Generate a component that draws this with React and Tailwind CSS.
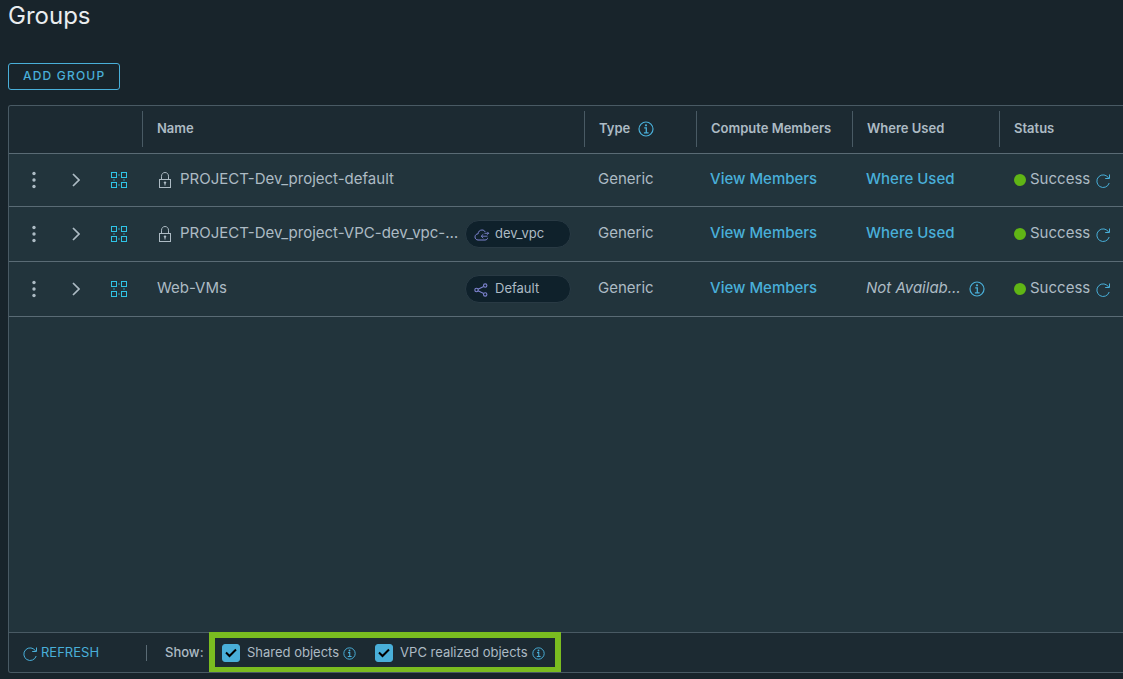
import { useState } from 'react';
import clsx from 'clsx';

const COLUMNS = [
  { label: 'Name' },
  { label: 'Type', info: true },
  { label: 'Compute Members' },
  { label: 'Where Used' },
  { label: 'Status' },
];

const GROUPS = [
  { name: 'PROJECT-Dev_project-default', locked: true, used: true, height: 'h-[53px]' },
  { name: 'PROJECT-Dev_project-VPC-dev_vpc-…', locked: true, used: true, tag: 'dev_vpc', TagIcon: CloudIcon, height: 'h-[55px]' },
  { name: 'Web-VMs', tag: 'Default', TagIcon: ShareIcon, height: 'h-[55px]' },
];

function InfoIcon({ className }) {
  return (
    <svg viewBox="0 0 16 16" fill="none" stroke="currentColor" className={clsx('shrink-0 text-[#49afd9]', className)} aria-hidden="true">
      <circle cx="8" cy="8" r="7" strokeWidth="1.2" />
      <path d="M6.2 6.9H8.3V11.6M5.9 11.8H10.6" strokeWidth="1.3" />
      <circle cx="8" cy="4.3" r="1.1" fill="currentColor" stroke="none" />
    </svg>
  );
}

function RefreshIcon({ className }) {
  return (
    <svg viewBox="0 0 14 14" fill="none" stroke="currentColor" className={clsx('shrink-0 text-[#49afd9]', className)} aria-hidden="true">
      <path d="M13.200 9A6.300 6.300 0 1 1 12.600 4" />
      <path d="M13.500 0.500V4.500H9.200" />
    </svg>
  );
}

function LockIcon() {
  return (
    <svg viewBox="0 0 14 18" width="14" height="18" fill="none" stroke="#adbbc4" className="shrink-0" aria-hidden="true">
      <path d="M3.5 8V5.2C3.5 3 5 1.5 7 1.5S10.5 3 10.5 5.2V8" />
      <rect x="1.5" y="8.5" width="11" height="8" />
      <circle cx="7" cy="11.6" r="1.2" fill="#adbbc4" stroke="none" />
      <path d="M7 12V14.5" />
    </svg>
  );
}

function GroupIcon() {
  return (
    <svg viewBox="0 0 18 18" width="18" height="18" fill="none" stroke="#2fc4e6" className="shrink-0" aria-hidden="true">
      <rect x="1.5" y="1.5" width="5" height="5" />
      <rect x="11.5" y="1.5" width="5" height="5" />
      <rect x="1.5" y="11.5" width="5" height="5" />
      <rect x="11.5" y="11.5" width="5" height="5" />
      <path d="M8 4H10M8 14H10M4 8V10M14 8V10" strokeOpacity="0.7" />
    </svg>
  );
}

function CloudIcon() {
  return (
    <svg viewBox="0 0 16 12" width="16" height="12" fill="none" stroke="#7d83cf" className="shrink-0" aria-hidden="true">
      <path d="M11.2 3C10.6 1.6 9.4 1 8 1C5.8 1 4.2 2.6 4.1 4.8C2.300 4.900 1 6.100 1 7.900C1 9.700 2.300 11 4 11H11C12.700 11 13.600 10 13.600 8.800" />
      <path d="M7.200 7.200H13.500M9.300 5.200L7.200 7.200L9.300 9.200M10.500 4.300H14.700M13.300 2.900L14.700 4.300L13.300 5.700" strokeWidth="0.9" />
    </svg>
  );
}

function ShareIcon() {
  return (
    <svg viewBox="0 0 14 14" width="14" height="14" fill="none" stroke="#7d83cf" strokeWidth="1.1" className="shrink-0" aria-hidden="true">
      <circle cx="2.5" cy="7" r="1.7" />
      <circle cx="11.2" cy="2.6" r="1.7" />
      <circle cx="11.2" cy="11.4" r="1.7" />
      <path d="M4 6.2L9.7 3.4M4 7.8L9.7 10.6" />
    </svg>
  );
}

function RowActions() {
  return (
    <div className="flex items-center pl-[19px]">
      <button type="button" aria-label="Row actions" className="flex w-3 justify-center text-[#adbbc4]">
        <svg viewBox="0 0 4 18" width="4" height="18" fill="currentColor">
          <circle cx="2" cy="2.5" r="1.7" />
          <circle cx="2" cy="9" r="1.7" />
          <circle cx="2" cy="15.5" r="1.7" />
        </svg>
      </button>
      <button type="button" aria-label="Expand row" className="ml-8 pt-px text-[#adbbc4]">
        <svg viewBox="0 0 8 14" width="8" height="14" fill="none" stroke="currentColor" strokeWidth="1.7">
          <path d="M1 1L7 7L1 13" />
        </svg>
      </button>
      <span className="ml-[30px]">
        <GroupIcon />
      </span>
    </div>
  );
}

function ShowOption({ id, label }) {
  const [checked, setChecked] = useState(true);

  return (
    <div className="flex items-center">
      <span className="relative flex size-[18px]">
        <input
          id={id}
          type="checkbox"
          checked={checked}
          onChange={(e) => setChecked(e.target.checked)}
          className="size-[18px] appearance-none rounded-[3px] border border-[#49afd9] checked:bg-[#49afd9]"
        />
        {checked && (
          <svg viewBox="0 0 18 18" fill="none" stroke="#000" strokeWidth="2" className="pointer-events-none absolute inset-0">
            <path d="M4 8.5L7.5 12L14 5.5" />
          </svg>
        )}
      </span>
      <label htmlFor={id} className="ml-[7px]">
        {label}
      </label>
      <InfoIcon className="mt-0.5 ml-1 size-[13px]" />
    </div>
  );
}

export default function App() {
  return (
    <div className="flex min-h-screen flex-col bg-[#18242b] pb-1.5 pl-2 font-['Inter',sans-serif] text-[#adbbc4]">
      <h1 className="text-2xl text-[#e9ecef]">Groups</h1>
      <button
        type="button"
        className="mt-[31px] mb-[15px] h-[27px] self-start rounded-[3px] border border-[#49afd9] px-3.5 pb-0.5 text-xs font-medium tracking-widest text-[#49afd9]"
      >
        ADD GROUP
      </button>

      <div className="flex flex-1 flex-col overflow-hidden rounded-l-[3px] border border-r-0 border-[#495a64] bg-[#22343c]">
        <table className="w-full table-fixed border-collapse text-left">
          <colgroup>
            <col className="w-[133px]" />
            <col />
            <col className="w-28" />
            <col className="w-[156px]" />
            <col className="w-[147px]" />
            <col className="w-[124px]" />
          </colgroup>
          <thead>
            <tr className="h-[47px] border-b border-[#5a6b75] bg-[#1c2a32]">
              <th aria-label="Actions" />
              {COLUMNS.map(({ label, info }) => (
                <th key={label} className="p-0 text-[13px] font-semibold">
                  <div className="flex h-9 items-center gap-2 border-l border-[#495a64] pb-0.5 pl-3.5">
                    {label}
                    {info && <InfoIcon className="mt-0.5 size-4" />}
                  </div>
                </th>
              ))}
            </tr>
          </thead>
          <tbody>
            {GROUPS.map(({ name, locked, used, tag, TagIcon, height }) => (
              <tr key={name} className={clsx('border-b border-[#5a6b75] text-[15px]', height)}>
                <td className="p-0">
                  <RowActions />
                </td>
                <td className="py-0 pr-[13px] pl-[15px]">
                  <div className="flex items-center">
                    {locked && (
                      <span className="mr-2 ml-px pt-px">
                        <LockIcon />
                      </span>
                    )}
                    <span className="min-w-0 flex-1 truncate">{name}</span>
                    {tag && (
                      <span className="flex h-7 w-[106px] shrink-0 items-center rounded-full border border-[#293a44] bg-[#0f212b] pl-2 text-[13px]">
                        <span className="flex w-[21px] pt-0.5">
                          <TagIcon />
                        </span>
                        {tag}
                      </span>
                    )}
                  </div>
                </td>
                <td className="py-0 pl-3.5">Generic</td>
                <td className="py-0 pl-3.5 font-medium">
                  <a href="#members" className="text-[#49afd9]">View Members</a>
                </td>
                <td className="py-0 pr-2 pl-3.5">
                  {used ? (
                    <a href="#used" className="font-medium text-[#49afd9]">Where Used</a>
                  ) : (
                    <div className="flex items-center gap-2">
                      <span className="italic">Not Availab…</span>
                      <InfoIcon className="size-4" />
                    </div>
                  )}
                </td>
                <td className="py-0 pl-[15px]">
                  <div className="flex items-center">
                    <span className="mr-1 size-3 shrink-0 rounded-full bg-[#60b515]" />
                    Success
                    <button type="button" aria-label="Refresh status" className="mt-0.5 ml-1.5">
                      <RefreshIcon className="size-3.5" />
                    </button>
                  </div>
                </td>
              </tr>
            ))}
          </tbody>
        </table>

        <div className="mt-auto flex h-10 items-center border-t border-[#495a64] bg-[#1c2a32] text-[13px]">
          <button type="button" className="flex w-[137px] items-center gap-1 pl-3.5 text-[#49afd9]">
            <RefreshIcon className="mt-0.5 size-3.5" />
            REFRESH
          </button>
          <span className="h-4 w-px bg-[#5a6b75]" />
          <span className="w-[62px] pl-[18px] font-medium">Show:</span>
          <div className="flex h-[41px] items-center gap-[19px] border-6 border-[#7abc20] pr-2.5 pl-[7px]">
            <ShowOption id="shared-objects" label="Shared objects" />
            <ShowOption id="vpc-objects" label="VPC realized objects" />
          </div>
        </div>
      </div>
    </div>
  );
}
